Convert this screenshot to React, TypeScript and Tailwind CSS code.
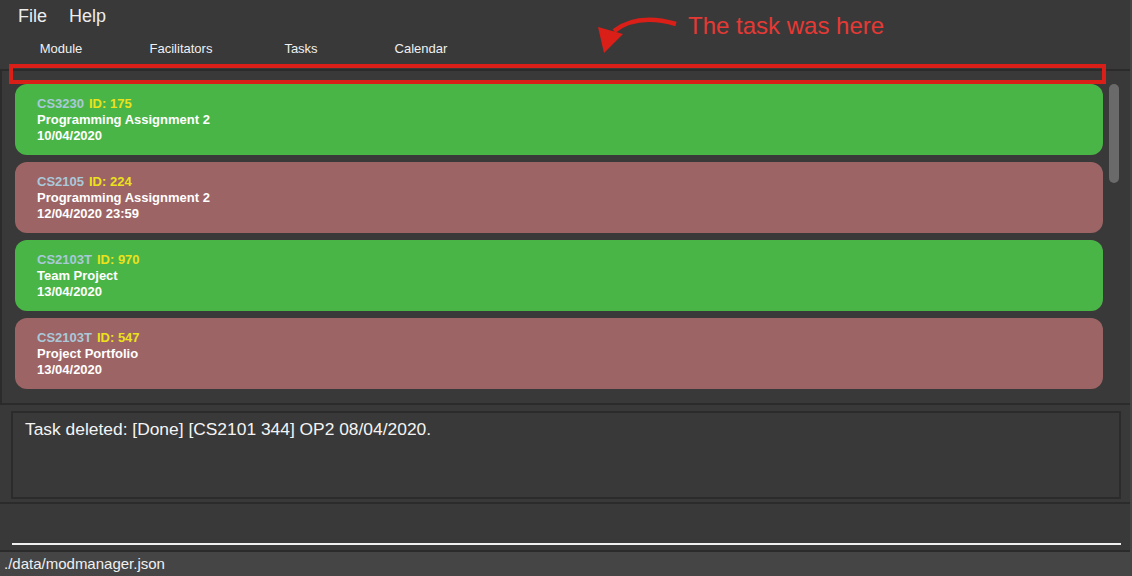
const tasks = [
  { code: "CS3230", id: 175, name: "Programming Assignment 2", due: "10/04/2020", done: true },
  { code: "CS2105", id: 224, name: "Programming Assignment 2", due: "12/04/2020 23:59", done: false },
  { code: "CS2103T", id: 970, name: "Team Project", due: "13/04/2020", done: true },
  { code: "CS2103T", id: 547, name: "Project Portfolio", due: "13/04/2020", done: false },
];

const tabs = ["Module", "Facilitators", "Tasks", "Calendar"];

function TaskCard({ task }: { task: (typeof tasks)[number] }) {
  return (
    <div
      className={`h-[71px] rounded-[12px] pl-[22px] pt-[12px] text-[13px] font-bold leading-[16px] text-white ${
        task.done ? "bg-[#4ab547]" : "bg-[#9d6465]"
      }`}
    >
      <div className="flex">
        <span className="text-[#a9c9d9]">{task.code}</span>
        <span className="ml-[5px] text-[#ebe21a]">ID: {task.id}</span>
      </div>
      <div>{task.name}</div>
      <div>{task.due}</div>
    </div>
  );
}

export default function App() {
  return (
    <div
      className="relative flex h-[576px] w-[1132px] flex-col overflow-hidden border-r-2 border-[#454545] bg-[#393939] text-white"
      style={{ fontFamily: '"Liberation Sans", Arial, sans-serif' }}
    >
      {/* menu bar */}
      <div className="flex h-[32px] items-center px-[7px] text-[18px] text-[#ececec]">
        <span className="px-[11px]">File</span>
        <span className="px-[11px]">Help</span>
      </div>

      {/* tabs */}
      <div className="mb-[4px] mt-[1px] flex h-[32px] items-center pl-[1px] text-[13px] text-[#f0f0f0]">
        {tabs.map((tab) => (
          <span key={tab} className="w-[120px] text-center">
            {tab}
          </span>
        ))}
      </div>

      {/* task list */}
      <div className="flex h-[336px] border-y-2 border-l-2 border-[#2b2b2b]">
        <div className="ml-[13px] mt-[13px] flex w-[1088px] flex-col gap-[7px]">
          {tasks.map((task) => (
            <TaskCard key={task.id} task={task} />
          ))}
        </div>
        <div className="ml-[6px] mt-[13px] h-[99px] w-[10px] rounded-full bg-[#6a6a6a]" />
      </div>

      {/* result display */}
      <div className="flex h-[99px] border-b-2 border-[#2b2b2b] pb-[6px] pl-[11px] pr-[9px] pt-[6px]">
        <div className="h-[88px] w-full border-2 border-[#2b2b2b] px-[12px] pt-[6px] text-[17.4px] leading-[20px] text-[#f4f4f4]">
          Task deleted: [Done] [CS2101 344] OP2 08/04/2020.
        </div>
      </div>

      {/* command box */}
      <div className="flex h-[46px] items-end pb-[5px] pl-[12px] pr-[9px]">
        <div className="h-[2px] w-full bg-[#f0f0f0]" />
      </div>

      {/* status bar */}
      <div className="flex flex-1 items-center border-t-2 border-[#2b2b2b] bg-[#454545] pl-[4px] text-[15px] text-[#f0f0f0]">
        ./data/modmanager.json
      </div>

      {/* annotation overlay */}
      <div className="pointer-events-none absolute left-[9px] top-[64px] h-[20px] w-[1097px] border-4 border-[#d91f17]" />
      <svg className="pointer-events-none absolute left-0 top-0" width="1132" height="80" viewBox="0 0 1132 80">
        <path d="M676 24 C 655 18, 632 17, 614 31" fill="none" stroke="#d91f17" strokeWidth="4.5" />
        <polygon points="598,27 623,34 604,53" fill="#d91f17" />
      </svg>
      <span className="pointer-events-none absolute left-[688px] top-[12px] text-[24px] leading-[28px] text-[#e53935]">
        The task was here
      </span>
    </div>
  );
}
